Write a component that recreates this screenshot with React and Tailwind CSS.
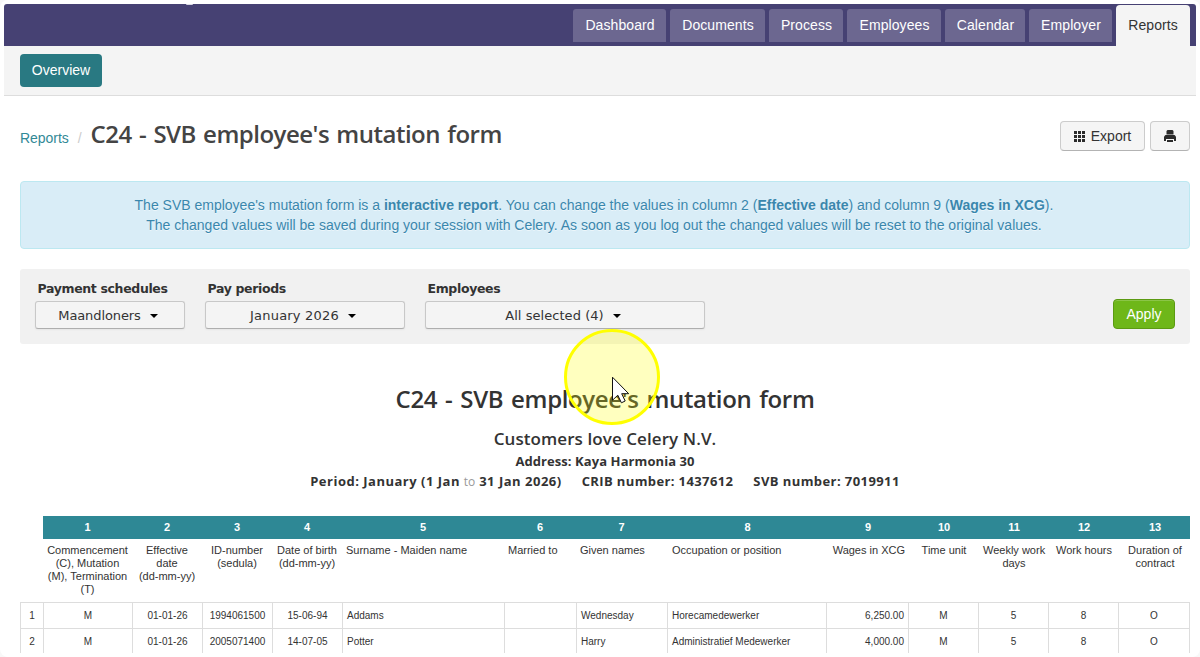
import React from "react"

const navItems = [
  { label: "Dashboard", width: "w-[93px]" },
  { label: "Documents", width: "w-[95px]" },
  { label: "Process", width: "w-[74px]" },
  { label: "Employees", width: "w-[94px]" },
  { label: "Calendar", width: "w-[80px]" },
  { label: "Employer", width: "w-[83px]" },
]

const columns = [
  { label: "Commencement\n(C), Mutation\n(M), Termination\n(T)", width: "w-[89px]", align: "text-center" },
  { label: "Effective\ndate\n(dd-mm-yy)", width: "w-[70px]", align: "text-center" },
  { label: "ID-number\n(sedula)", width: "w-[70px]", align: "text-center" },
  { label: "Date of birth\n(dd-mm-yy)", width: "w-[70px]", align: "text-center" },
  { label: "Surname - Maiden name", width: "w-[162px]", align: "text-left" },
  { label: "Married to", width: "w-[72px]", align: "text-left" },
  { label: "Given names", width: "w-[91px]", align: "text-left" },
  { label: "Occupation or position", width: "w-[159px]", align: "text-left" },
  { label: "Wages in XCG", width: "w-[82px]", align: "text-right" },
  { label: "Time unit", width: "w-[70px]", align: "text-center" },
  { label: "Weekly work\ndays", width: "w-[70px]", align: "text-center" },
  { label: "Work hours", width: "w-[70px]", align: "text-center" },
  { label: "Duration of\ncontract", width: "w-[72px]", align: "text-center" },
]

const rows = [
  ["M", "01-01-26", "1994061500", "15-06-94", "Addams", "", "Wednesday", "Horecamedewerker", "6,250.00", "M", "5", "8", "O"],
  ["M", "01-01-26", "2005071400", "14-07-05", "Potter", "", "Harry", "Administratief Medewerker", "4,000.00", "M", "5", "8", "O"],
]

const Header = () => (
  <header className="relative flex h-[42px] justify-end gap-1 overflow-hidden rounded-t-[3px] bg-[#464173] pr-1.5 text-[14px] leading-[33px] tracking-[0.08px] text-white">
    <span className="absolute left-[182px] top-0 h-px w-[7px] rounded-b-full bg-[#d9d8e5]" />
    {navItems.map((item) => (
      <a key={item.label} className={`mt-[5px] h-[33px] shrink-0 rounded-t-[3px] bg-[#6c6790] pl-px text-center ${item.width}`}>
        {item.label}
      </a>
    ))}
    <a className="mt-px h-[41px] w-[74px] shrink-0 rounded-t-[4px] bg-[#f4f4f4] pt-1 text-center text-[#333]">Reports</a>
  </header>
)

const Caret = () => (
  <span className="relative -top-px ml-[9px] inline-block border-x-4 border-t-4 border-x-transparent border-t-black align-middle" />
)

const Filter = ({ label, value, className, textClass }) => (
  <div className={className}>
    <label className="block h-8 whitespace-nowrap pl-[2.500px] pt-[7px] text-[12.500px] font-bold leading-[26px] tracking-[-0.35px] text-[#333]">{label}</label>
    <button
      type="button"
      className={`block h-7 w-full rounded-[3px] border border-[#c8c8c8] border-b-[#aeaeae] bg-[#f4f4f4] pr-1 pt-px text-[13px] leading-[25px] text-[#333] shadow-[0_1px_2px_rgba(0,0,0,0.05)] ${textClass}`}
    >
      {value}
      <Caret />
    </button>
  </div>
)

const GridIcon = () => (
  <svg width="11" height="11" viewBox="0 0 11 11" fill="#2b2b2b" shapeRendering="crispEdges">
    {[0, 4, 8].map((y) => [0, 4, 8].map((x) => <rect key={`${x}-${y}`} x={x} y={y} width="3" height="3" />))}
  </svg>
)

const PrintIcon = () => (
  <svg width="12" height="12" viewBox="0 0 12 12" fill="#2b2b2b">
    <path d="M3.500 0h5l1 1v3.400h-7V1z" />
    <path d="M1.500 5h9L12 6.500V11H0V6.500z" />
    <path d="M2 9h8v3H2z" fill="#f5f5f5" />
    <path d="M3 10h6v2H3z" />
  </svg>
)

const ReportTable = () => (
  <table className="w-[1170px] table-fixed border-separate border-spacing-0 text-[#333]">
    <thead className="text-[11px] leading-[13px]">
      <tr className="h-[23px] text-white">
        <th className="w-[23px] p-0" />
        {columns.map((col, i) => (
          <th key={col.label} className={`bg-[#2e8895] py-0 pr-0 font-bold ${i > 6 ? "pl-[2px]" : "pl-0"} ${col.width}`}>
            {i + 1}
          </th>
        ))}
      </tr>
      <tr className="h-[63px] align-top">
        <th className="p-0" />
        {columns.map((col, i) => (
          <th
            key={col.label}
            className={`whitespace-pre pb-0 pt-[5px] font-normal ${i > 6 ? "pl-[5px] pr-[3px]" : "px-1"} ${col.align}`}
          >
            {col.label}
          </th>
        ))}
      </tr>
    </thead>
    <tbody className="text-[10px] leading-[13px]">
      {rows.map((row, i) => (
        <tr key={i} className="h-[26px]">
          <td className="border-l border-t border-[#ddd] p-0 text-center">{i + 1}</td>
          {row.map((cell, j) => (
            <td
              key={j}
              className={`whitespace-nowrap border-l border-t border-[#ddd] px-1 py-0 last:border-r ${columns[j].align}`}
            >
              {cell}
            </td>
          ))}
        </tr>
      ))}
    </tbody>
  </table>
)

const CursorHighlight = () => (
  <div className="pointer-events-none absolute left-[560px] top-[325px] h-[96px] w-[96px] rounded-full border-[3px] border-[#ffff00] bg-[#ffff00]/25">
    <svg className="absolute left-[44px] top-[44px]" width="20" height="29" viewBox="0 0 20 29">
      <path d="M1.500 1.200v23l5.300-5 3.600 7.600 3.800-1.800-3.500-7.300h7z" fill="#fff" stroke="#111" strokeWidth="1" />
    </svg>
  </div>
)

const App = () => {
  return (
    <div className="h-[657px] w-[1200px] overflow-hidden bg-[#f8f8f8] font-['Liberation_Sans',Arial,sans-serif]">
      <div className="h-full rounded-[8px] bg-white p-1">
        <div className="relative h-[649px] overflow-hidden">
          <Header />
          <div className="h-[50px] border-b border-[#ddd] bg-[#f4f4f4] px-4 pt-2">
            <a className="block h-[33px] w-[82px] rounded-[4px] bg-[#297982] text-center text-[14px] leading-[33px] text-white">Overview</a>
          </div>

          <main className="pl-4 pr-1.5">
            <div className="flex h-[85px] items-start justify-between pt-[25px]">
              <div className="-mt-px flex items-baseline whitespace-nowrap">
                <a className="text-[14px] tracking-[-0.05px] text-[#328996]">Reports</a>
                <span className="ml-[9px] mr-[9px] text-[14px] text-[#ccc]">/</span>
                <h1 className="font-['Open_Sans',sans-serif] text-[24px] font-semibold leading-[28px] tracking-[-0.5px] text-[#444] [word-spacing:1.500px]">
                  C24 - SVB employee's mutation form
                </h1>
              </div>
              <div className="flex gap-[5px]">
                <button type="button" className="flex h-[30px] w-[85px] items-center justify-center gap-1.5 rounded-[4px] border border-[#ccc] border-b-[#b3b3b3] bg-[#f5f5f5] text-[14px] text-[#333]">
                  <GridIcon />
                  Export
                </button>
                <button type="button" className="flex h-[30px] w-[40px] items-center justify-center rounded-[4px] border border-[#ccc] border-b-[#b3b3b3] bg-[#f5f5f5]">
                  <PrintIcon />
                </button>
              </div>
            </div>

            <div className="h-[68px] rounded-[4px] border border-[#bce8f1] bg-[#d9edf7] pr-[22px] pt-[13px] text-center text-[14px] leading-5 text-[#3a87ad] [text-shadow:0_1px_0_rgba(255,255,255,0.5)]">
              <p>
                The SVB employee's mutation form is a <b>interactive report</b>. You can change the values in column 2 (<b>Effective date</b>) and column 9 (<b>Wages in XCG</b>).
              </p>
              <p>The changed values will be saved during your session with Celery. As soon as you log out the changed values will be reset to the original values.</p>
            </div>

            <div className="mt-5 flex h-[75px] items-start rounded-[3px] bg-[#f1f1f1] px-[15px] font-['DejaVu_Sans',Verdana,sans-serif]">
              <Filter className="w-[150px]" label="Payment schedules" value="Maandloners" textClass="tracking-[-0.1px]" />
              <Filter className="ml-5 w-[200px]" label="Pay periods" value="January 2026" textClass="tracking-[0.2px]" />
              <Filter className="ml-5 w-[280px]" label="Employees" value="All selected (4)" textClass="tracking-[0.05px]" />
              <button type="button" className="ml-auto mt-[30px] h-[30px] w-[62px] rounded-[4px] border border-[#5b9a12] bg-[#6eb719] font-['Liberation_Sans',Arial,sans-serif] text-[14px] text-white shadow-[inset_0_1px_0_rgba(255,255,255,0.2)]">
                Apply
              </button>
            </div>

            <div className="h-[172px] pt-[40px] text-center font-['Open_Sans',sans-serif] font-semibold text-[#333]">
              <h2 className="text-[24px] leading-[30px] tracking-[-0.35px] [word-spacing:2px]">C24 - SVB employee's mutation form</h2>
              <h3 className="mt-[14px] text-[17px] leading-[22px] tracking-[0.08px]">Customers love Celery N.V.</h3>
              <p className="mt-[1px] text-[13px] font-bold leading-5 tracking-[0.08px]">Address: Kaya Harmonia 30</p>
              <p className="flex justify-center gap-5 whitespace-nowrap text-[13px] font-bold leading-5">
                <span className="tracking-[0.5px]">
                  Period: January (1 Jan <span className="text-[12px] font-normal tracking-normal text-[#999]">to</span> 31 Jan 2026)
                </span>
                <span className="tracking-[0.38px]">CRIB number: 1437612</span>
                <span className="tracking-[0.42px]">SVB number: 7019911</span>
              </p>
            </div>

            <ReportTable />
          </main>

          <CursorHighlight />
        </div>
      </div>
    </div>
  )
}

export default App
